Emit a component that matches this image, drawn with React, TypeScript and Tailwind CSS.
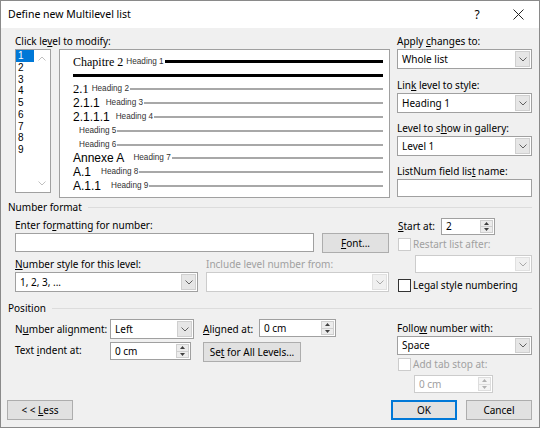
import React from "react";

const U = ({ children }: { children: React.ReactNode }) => (
  <span className="underline underline-offset-[1px] decoration-[1px]">{children}</span>
);

function Chevron({ color = "#606060" }: { color?: string }) {
  return (
    <svg width="8" height="5" viewBox="0 0 8 5">
      <path d="M0.5 0.5 L4 4 L7.5 0.5" fill="none" stroke={color} strokeWidth="1" />
    </svg>
  );
}

function Select({ value, className, disabled }: { value?: string; className: string; disabled?: boolean }) {
  return (
    <div
      className={
        "flex items-stretch bg-white border " +
        (disabled ? "border-[#cccccc] " : "border-[#a0a0a0] ") +
        className
      }
    >
      <div className="flex-1 flex items-center pl-[4px] text-black">{value}</div>
      <div
        className={
          "w-[15px] m-px flex items-center justify-center border " +
          (disabled ? "bg-[#f0f0f0] border-[#e0e0e0]" : "bg-[#e6e6e6] border-[#cfcfcf]")
        }
      >
        <Chevron color={disabled ? "#a8a8a8" : "#606060"} />
      </div>
    </div>
  );
}

function Tri({ up, color }: { up?: boolean; color: string }) {
  return (
    <svg width="5" height="3" viewBox="0 0 5 3">
      <path d={up ? "M0 3 L2.5 0 L5 3 Z" : "M0 0 L2.5 3 L5 0 Z"} fill={color} />
    </svg>
  );
}

function Spin({ value, className, disabled }: { value: string; className: string; disabled?: boolean }) {
  const c = disabled ? "#b0b0b0" : "#404040";
  return (
    <div
      className={
        "flex items-stretch bg-white border " +
        (disabled ? "border-[#cccccc] text-[#a0a0a0] " : "border-[#a0a0a0] text-black ") +
        className
      }
    >
      <div className="flex-1 flex items-center pl-[4px]">{value}</div>
      <div className={"w-[13px] my-px mr-px flex flex-col border " + (disabled ? "border-[#dddddd]" : "border-[#cfcfcf]")}>
        <div className={"flex-1 flex items-center justify-center border-b " + (disabled ? "border-[#dddddd] bg-[#f4f4f4]" : "border-[#cfcfcf] bg-[#ececec]")}>
          <Tri up color={c} />
        </div>
        <div className={"flex-1 flex items-center justify-center " + (disabled ? "bg-[#f4f4f4]" : "bg-[#ececec]")}>
          <Tri color={c} />
        </div>
      </div>
    </div>
  );
}

function Button({ children, className, primary }: { children: React.ReactNode; className: string; primary?: boolean }) {
  return (
    <div
      className={
        "flex items-center justify-center bg-[#e1e1e1] border text-black " +
        (primary ? "border-[#0078d7] shadow-[inset_0_0_0_1px_#0078d7] " : "border-[#adadad] ") +
        className
      }
    >
      {children}
    </div>
  );
}

function Check({ disabled }: { disabled?: boolean }) {
  return (
    <div
      className={
        "w-[13px] h-[13px] bg-white border shrink-0 " + (disabled ? "border-[#cccccc]" : "border-[#333333]")
      }
    />
  );
}

function GroupHeader({ title }: { title: string }) {
  return (
    <div className="flex items-center h-[14px] -ml-[8px]">
      <span className="leading-[14px]">{title}</span>
      <div className="flex-1 ml-[6px] border-t border-[#dcdcdc] h-0 mt-[1px]" />
    </div>
  );
}

const H = ({ children, className = "" }: { children: React.ReactNode; className?: string }) => (
  <span
    className={"text-[8.2px] leading-none text-[#333] whitespace-nowrap " + className}
    style={{ fontFamily: '"Liberation Sans", Arial, sans-serif' }}
  >
    {children}
  </span>
);

function GreyLine() {
  return <div className="flex-1 h-[2px] bg-[#a8a8a8] ml-px" />;
}

const serif = { fontFamily: '"Liberation Serif", "Times New Roman", serif' };
const sans = { fontFamily: '"Liberation Sans", Arial, sans-serif' };

export default function App() {
  const levels = ["1", "2", "3", "4", "5", "6", "7", "8", "9"];
  return (
    <div
      className="w-[540px] h-[428px] flex flex-col border border-[#8a8a8a] bg-white text-[10px] text-black overflow-hidden whitespace-nowrap"
      style={{ fontFamily: '"Noto Sans", "Segoe UI", sans-serif' }}
    >
      {/* Title bar */}
      <div className="h-[27px] flex items-center bg-white pl-[7px] shrink-0">
        <span className="text-[10.5px] leading-none">Define new Multilevel list</span>
        <div className="flex-1" />
        <span className="text-[12px] w-[12px] text-center mr-[30px]">?</span>
        <svg width="11" height="11" viewBox="0 0 11 11" className="mr-[15px]">
          <path d="M0.5 0.5 L10.5 10.5 M10.5 0.5 L0.5 10.5" stroke="#222" strokeWidth="1" />
        </svg>
      </div>

      {/* Body */}
      <div className="flex-1 bg-[#f0f0f0] flex flex-col pl-[14px] pr-[7px] pt-[5px] pb-[7px]">
        {/* Top section */}
        <div className="flex">
          <div className="w-[375px] flex flex-col">
            <div className="h-[16px] leading-[16px]">
              Click le<U>v</U>el to modify:
            </div>
            <div className="flex items-start">
              <div className="w-[36px] h-[144px] bg-white border border-[#a0a0a0] flex">
                <div className="w-[18px] flex flex-col">
                  {levels.map((l, i) => (
                    <div
                      key={l}
                      className={
                        "h-[11.75px] leading-[11.75px] pl-[2px] text-[10px] " +
                        (i === 0 ? "bg-[#0078d7] text-white" : "")
                      }
                      style={sans}
                    >
                      {l}
                    </div>
                  ))}
                </div>
                <div className="flex-1 flex flex-col items-center justify-between py-[6px]">
                  <svg width="8" height="5" viewBox="0 0 8 5">
                    <path d="M0.5 4.5 L4 1 L7.5 4.5" fill="none" stroke="#c0c0c0" strokeWidth="1" />
                  </svg>
                  <Chevron color="#c0c0c0" />
                </div>
              </div>
              <div className="ml-[8px] w-[331px] h-[149px] bg-white border border-[#a0a0a0] pl-[13px] pr-[6px] pt-[5px] flex flex-col">
                <div className="h-[13.8px] flex items-center">
                  <span className="text-[12px] leading-none" style={serif}>Chapitre 2</span>
                  <H className="ml-[3px]">Heading 1</H>
                  <div className="flex-1 h-[3px] bg-black ml-px" />
                </div>
                <div className="h-[13.8px] flex items-center">
                  <div className="flex-1 h-[3px] bg-black" />
                </div>
                <div className="h-[13.8px] flex items-center">
                  <span className="text-[12.5px] leading-none" style={serif}>2.1</span>
                  <H className="ml-[3px]">Heading 2</H>
                  <GreyLine />
                </div>
                <div className="h-[13.8px] flex items-center">
                  <span className="text-[12px] leading-none" style={sans}>2.1.1</span>
                  <H className="ml-[6px]">Heading 3</H>
                  <GreyLine />
                </div>
                <div className="h-[13.8px] flex items-center">
                  <span className="text-[12px] leading-none" style={sans}>2.1.1.1</span>
                  <H className="ml-[6px]">Heading 4</H>
                  <GreyLine />
                </div>
                <div className="h-[13.8px] flex items-center pl-[6px]">
                  <H>Heading 5</H>
                  <GreyLine />
                </div>
                <div className="h-[13.8px] flex items-center pl-[6px]">
                  <H>Heading 6</H>
                  <GreyLine />
                </div>
                <div className="h-[13.8px] flex items-center">
                  <span className="text-[12px] leading-none" style={sans}>Annexe A</span>
                  <H className="ml-[9px]">Heading 7</H>
                  <GreyLine />
                </div>
                <div className="h-[13.8px] flex items-center">
                  <span className="text-[12px] leading-none" style={sans}>A.1</span>
                  <H className="ml-[10px]">Heading 8</H>
                  <GreyLine />
                </div>
                <div className="h-[13.8px] flex items-center">
                  <span className="text-[12px] leading-none" style={sans}>A.1.1</span>
                  <H className="ml-[10px]">Heading 9</H>
                  <GreyLine />
                </div>
              </div>
            </div>
          </div>
          <div className="ml-[7px] w-[135px] flex flex-col">
            <div className="h-[16px] leading-[16px]">
              Apply <U>c</U>hanges to:
            </div>
            <Select value="Whole list" className="h-[20px]" />
            <div className="mt-[8px] h-[16px] leading-[16px]">
              Lin<U>k</U> level to style:
            </div>
            <Select value="Heading 1" className="h-[20px]" />
            <div className="mt-[7px] h-[16px] leading-[16px]">
              Level to s<U>h</U>ow in gallery:
            </div>
            <Select value="Level 1" className="h-[20px]" />
            <div className="mt-[7px] h-[16px] leading-[16px]">
              ListNum field lis<U>t</U> name:
            </div>
            <div className="h-[18px] bg-white border border-[#a0a0a0]" />
          </div>
        </div>

        {/* Number format */}
        <div className="mt-[2px] pl-[1px]">
          <GroupHeader title="Number format" />
        </div>
        <div className="flex mt-[3px]">
          <div className="w-[375px] flex flex-col">
            <div className="h-[16px] leading-[16px]">
              Enter fo<U>r</U>matting for number:
            </div>
            <div className="flex">
              <div className="w-[299px] h-[19px] bg-white border border-[#a0a0a0]" />
              <Button className="ml-[8px] w-[67px] h-[20px]">
                <span>
                  <U>F</U>ont...
                </span>
              </Button>
            </div>
            <div className="flex mt-[3px]">
              <div className="w-[183px] flex flex-col">
                <div className="h-[16px] leading-[16px]">
                  <U>N</U>umber style for this level:
                </div>
                <Select value="1, 2, 3, ..." className="h-[20px]" />
              </div>
              <div className="ml-[8px] w-[183px] flex flex-col">
                <div className="h-[16px] leading-[16px] text-[#a0a0a0]">Include level number from:</div>
                <Select className="h-[20px]" disabled />
              </div>
            </div>
          </div>
          <div className="ml-[7px] w-[135px] flex flex-col pl-[1px]">
            <div className="flex items-center h-[17px] mt-[1px]">
              <div className="w-[43px]">
                <U>S</U>tart at:
              </div>
              <Spin value="2" className="w-[54px] h-[17px]" />
            </div>
            <div className="flex items-center h-[13px] mt-[3px]">
              <Check disabled />
              <span className="ml-[2px] text-[#a0a0a0]">Restart list after:</span>
            </div>
            <Select className="ml-[17px] mt-[4px] h-[18px]" disabled />
            <div className="flex items-center h-[13px] mt-[6px]">
              <Check />
              <span className="ml-[2px]">
                Le<U>g</U>al style numbering
              </span>
            </div>
          </div>
        </div>

        {/* Position */}
        <div className="mt-[9px] pl-[1px]">
          <GroupHeader title="Position" />
        </div>
        <div className="flex mt-[4px]">
          <div className="w-[375px] flex flex-col">
            <div className="flex items-center h-[20px]">
              <div className="w-[95px]">
                N<U>u</U>mber alignment:
              </div>
              <Select value="Left" className="w-[84px] h-[20px]" />
              <div className="ml-[9px] w-[56px]">
                <U>A</U>ligned at:
              </div>
              <Spin value="0 cm" className="w-[77px] h-[18px] self-start" />
            </div>
            <div className="flex items-start h-[20px] mt-[3px]">
              <div className="w-[95px] h-[14px] leading-[14px] mt-px">
                Text <U>i</U>ndent at:
              </div>
              <Spin value="0 cm" className="w-[81px] h-[18px]" />
              <Button className="ml-[12px] w-[98px] h-[20px]">
                <span>
                  Se<U>t</U> for All Levels...
                </span>
              </Button>
            </div>
          </div>
          <div className="ml-[7px] w-[135px] flex flex-col">
            <div className="h-[16px] leading-[16px] mt-[1px]">
              Follo<U>w</U> number with:
            </div>
            <Select value="Space" className="h-[19px]" />
            <div className="flex items-center h-[13px] mt-[3px] pl-[1px]">
              <Check disabled />
              <span className="ml-[2px] text-[#a0a0a0]">Add tab stop at:</span>
            </div>
            <Spin value="0 cm" className="ml-[17px] mt-[4px] w-[79px] h-[18px]" disabled />
          </div>
        </div>

        {/* Bottom buttons */}
        <div className="mt-auto flex -ml-[8px]">
          <Button className="w-[66px] h-[20px]">
            <span>
              &lt; &lt; <U>L</U>ess
            </span>
          </Button>
          <div className="flex-1" />
          <Button primary className="w-[66px] h-[20px]">
            OK
          </Button>
          <Button className="ml-[9px] w-[66px] h-[20px]">Cancel</Button>
        </div>
      </div>
    </div>
  );
}
